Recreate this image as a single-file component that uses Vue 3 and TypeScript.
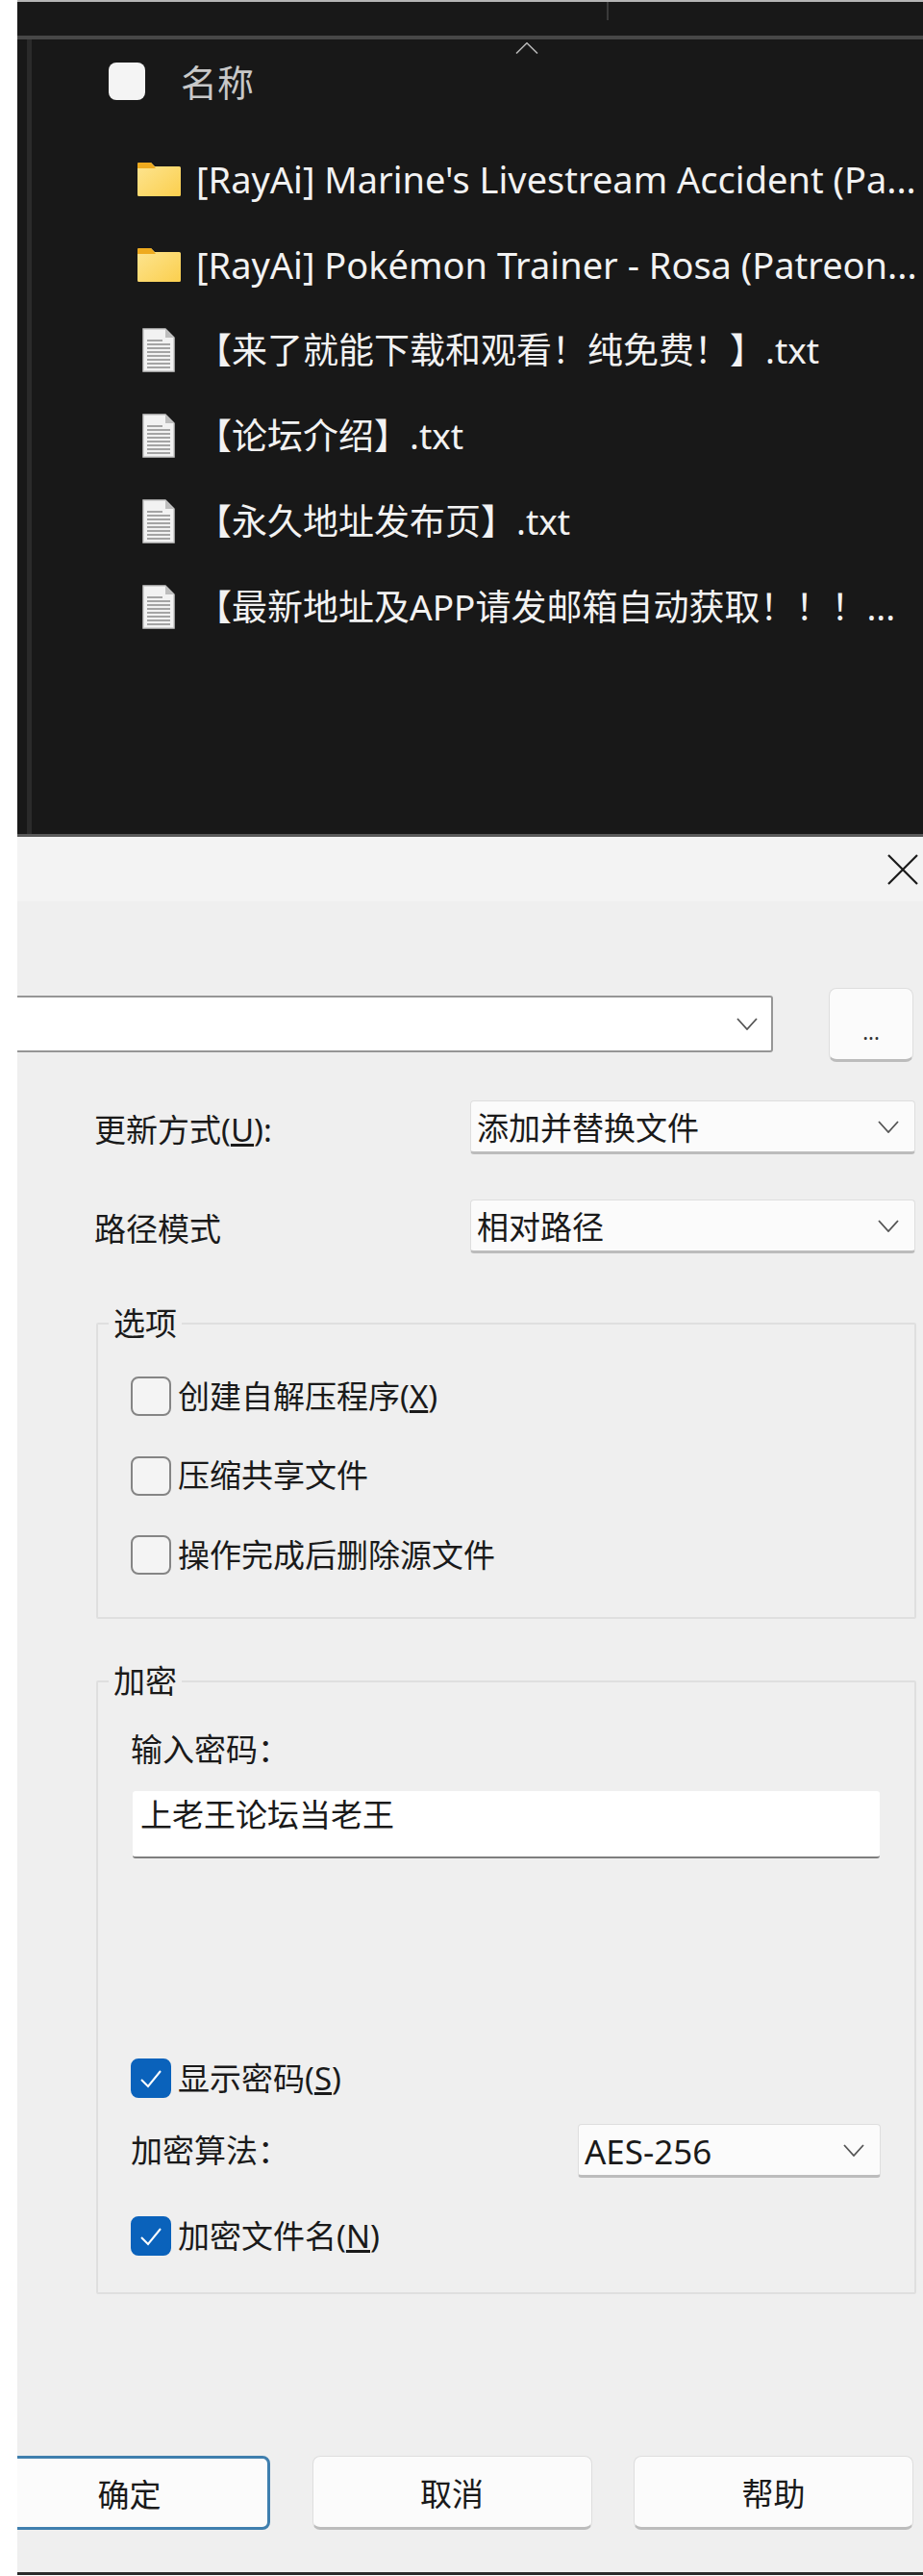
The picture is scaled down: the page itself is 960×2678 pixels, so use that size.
<script setup lang="ts">
interface Row { kind: 'folder' | 'file'; name: string }
const rows: Row[] = [
  { kind: 'folder', name: "[RayAi] Marine's Livestream Accident (Pa..." },
  { kind: 'folder', name: '[RayAi] Pokémon Trainer - Rosa (Patreon...' },
  { kind: 'file', name: '【来了就能下载和观看！纯免费！】.txt' },
  { kind: 'file', name: '【论坛介绍】.txt' },
  { kind: 'file', name: '【永久地址发布页】.txt' },
  { kind: 'file', name: '【最新地址及APP请发邮箱自动获取！！！...' },
]
const lines = [17, 21, 25, 29, 33, 37, 41]
</script>

<template>
  <div class="page">
    <section class="explorer">
      <div class="toolbar"><span class="divider"></span></div>
      <div class="list">
        <svg class="sort" viewBox="0 0 24 12" width="24" height="12"><path d="M1 11.5 12 .8 23 11.5" fill="none" stroke="#b5b5b5" stroke-width="1.6" /></svg>
        <div class="head">
          <span class="head-check"></span>
          <span class="head-name">名称</span>
        </div>
        <div v-for="r in rows" :key="r.name" class="row">
          <span class="icon">
            <svg v-if="r.kind === 'folder'" viewBox="0 0 46 36" width="46" height="36">
              <defs>
                <linearGradient id="fg" x1="0" y1="0" x2="1" y2="1">
                  <stop offset="0" stop-color="#fde592" />
                  <stop offset="1" stop-color="#fbcf4e" />
                </linearGradient>
              </defs>
              <path d="M1 2.5A1.5 1.5 0 0 1 2.500 1H15l4 4h25.500A1.500 1.500 0 0 1 46 6.500V34.500A1.500 1.500 0 0 1 44.500 36H2.500A1.500 1.500 0 0 1 1 34.500Z" fill="url(#fg)" />
              <path d="M1 2.500A1.500 1.500 0 0 1 2.500 1H15l5 6H1Z" fill="#eeaa1e" />
            </svg>
            <svg v-else viewBox="0 0 34 46" width="34" height="46">
              <path d="M1 1H24L33 10V45H1Z" fill="#f2f2f2" stroke="#c8c8c8" stroke-width="1.500" />
              <path d="M24 1V10H33Z" fill="#bdbdbd" />
              <path v-for="y in lines" :key="y" :d="`M5 ${y}H29`" stroke="#a4a4a4" stroke-width="2" />
              <path d="M5 13H21" stroke="#a4a4a4" stroke-width="2" />
            </svg>
          </span>
          <span class="row-name" :class="r.kind">{{ r.name }}</span>
        </div>
      </div>
    </section>

    <section class="dialog">
      <div class="titlebar">
        <svg viewBox="0 0 32 32" width="32" height="32"><path d="M1 1 31 31M31 1 1 31" stroke="#1a1a1a" stroke-width="2.200" fill="none" /></svg>
      </div>
      <div class="body">
        <div class="path-row">
          <div class="combo">
            <svg class="chev" viewBox="0 0 22 13" width="22" height="13"><path d="M1 1 11 12 21 1" fill="none" stroke="#555" stroke-width="1.800" /></svg>
          </div>
          <button class="browse"><span>...</span></button>
        </div>

        <div class="field first">
          <span class="label">更新方式(<u>U</u>):</span>
          <div class="select wide"><span>添加并替换文件</span><svg class="chev" viewBox="0 0 22 13" width="22" height="13"><path d="M1 1 11 12 21 1" fill="none" stroke="#555" stroke-width="1.800" /></svg></div>
        </div>
        <div class="field second">
          <span class="label">路径模式</span>
          <div class="select wide"><span>相对路径</span><svg class="chev" viewBox="0 0 22 13" width="22" height="13"><path d="M1 1 11 12 21 1" fill="none" stroke="#555" stroke-width="1.800" /></svg></div>
        </div>

        <fieldset class="group options">
          <legend>选项</legend>
          <label class="check"><span class="box"></span><span>创建自解压程序(<u>X</u>)</span></label>
          <label class="check"><span class="box"></span><span>压缩共享文件</span></label>
          <label class="check"><span class="box"></span><span>操作完成后删除源文件</span></label>
        </fieldset>

        <fieldset class="group secure">
          <legend>加密</legend>
          <div class="pw-label">输入密码：</div>
          <div class="pw-input">上老王论坛当老王</div>
          <label class="check show"><span class="box on"><svg viewBox="0 0 24 20" width="24" height="20"><path d="M2 11 9 18 22 2" fill="none" stroke="#fff" stroke-width="2" /></svg></span><span>显示密码(<u>S</u>)</span></label>
          <div class="algo">
            <span class="algo-label">加密算法：</span>
            <div class="select narrow"><span>AES-256</span><svg class="chev" viewBox="0 0 22 13" width="22" height="13"><path d="M1 1 11 12 21 1" fill="none" stroke="#555" stroke-width="1.800" /></svg></div>
          </div>
          <label class="check names"><span class="box on"><svg viewBox="0 0 24 20" width="24" height="20"><path d="M2 11 9 18 22 2" fill="none" stroke="#fff" stroke-width="2" /></svg></span><span>加密文件名(<u>N</u>)</span></label>
        </fieldset>

        <div class="actions">
          <button class="btn primary">确定</button>
          <button class="btn">取消</button>
          <button class="btn">帮助</button>
        </div>
      </div>
    </section>
    <div class="edge"></div>
  </div>
</template>

<style>
html, body { margin: 0; background: #fff; }
</style>

<style scoped>
.page {
  width: 960px;
  height: 2678px;
  box-sizing: border-box;
  padding-left: 18px;
  overflow: hidden;
  background: #fff;
  font-family: "Noto Sans", "Noto Sans CJK SC", sans-serif;
  color: #1a1a1a;
  font-size: 33px;
}
.explorer {
  height: 870px;
  box-sizing: border-box;
  background: #181818;
  border-top: 2px solid #b5b5b5;
  border-bottom: 3px solid #5a5a5a;
  display: flex;
  flex-direction: column;
}
.toolbar {
  height: 35px;
  flex: none;
  border-bottom: 4px solid #474747;
  box-sizing: content-box;
}
.divider {
  display: block;
  width: 2px;
  height: 19px;
  margin-left: 613px;
  background: #3a3a3a;
}
.list {
  position: relative;
  flex: 1;
  margin-left: 10px;
  border-left: 5px solid #2a2a2a;
  padding: 24px 0 0 80px;
}
.sort {
  position: absolute;
  left: 503px;
  top: 3px;
}
.head {
  display: flex;
  align-items: center;
  height: 39px;
  margin-bottom: 37px;
}
.head-check {
  width: 38px;
  height: 39px;
  border-radius: 8px;
  background: #f4f4f4;
}
.head-name {
  margin-left: 37px;
  font-size: 38px;
  line-height: 44px;
  color: #c8c8c8;
}
.row {
  display: flex;
  align-items: center;
  height: 89px;
  padding-left: 29px;
}
.icon {
  width: 46px;
  flex: none;
  display: flex;
  justify-content: center;
}
.row-name {
  margin-left: 16px;
  line-height: 46px;
  white-space: nowrap;
  color: #f2f2f2;
}
.row-name.folder { font-size: 38px; }
.row-name.file { font-size: 37px; }
.dialog {
  background: #efefef;
  overflow: hidden;
}
.titlebar {
  height: 67px;
  box-sizing: border-box;
  background: #f3f3f3;
  padding: 18px 5px 0 0;
  display: flex;
  justify-content: flex-end;
  align-items: flex-start;
}
.body {
  padding: 90px 0 44px;
  background: #efefef;
}
.path-row {
  display: flex;
  align-items: flex-start;
}
.combo {
  width: 796px;
  height: 59px;
  margin: 8px 0 0 -10px;
  box-sizing: border-box;
  background: #fff;
  border: 2px solid #969696;
  border-radius: 3px;
  display: flex;
  align-items: center;
  justify-content: flex-end;
  padding-right: 14px;
}
.browse {
  width: 88px;
  height: 77px;
  margin-left: 58px;
  box-sizing: border-box;
  padding: 14px 0 0;
  background: #fbfbfb;
  border: 1px solid #dedede;
  border-bottom: 3px solid #bcbcbc;
  border-radius: 8px;
  font: inherit;
  font-size: 22px;
  color: #333;
}
.field {
  display: flex;
  align-items: center;
  padding-left: 80px;
}
.field.first { margin-top: 40px; }
.field.second { margin-top: 47px; }
.label {
  width: 392px;
  flex: none;
  padding-top: 6px;
  line-height: 40px;
}
.select {
  box-sizing: border-box;
  height: 56px;
  display: flex;
  align-items: center;
  justify-content: space-between;
  background: #fbfbfb;
  border: 1px solid #dedede;
  border-bottom: 3px solid #bcbcbc;
  border-radius: 4px;
  padding: 0 16px 0 6px;
  line-height: 40px;
}
.select > span { padding-top: 4px; }
.select.wide { width: 463px; margin-left: -1px; }
.select.narrow { width: 315px; font-size: 35px; }
.group {
  margin: 0 0 0 82px;
  width: 853px;
  min-width: 0;
  box-sizing: border-box;
  border: 2px solid #dfdfdf;
  border-radius: 2px;
  padding: 0 0 0 34px;
}
.group legend {
  margin-left: -23px;
  padding: 0 5px;
  line-height: 40px;
}
.options {
  margin-top: 53px;
  padding-top: 35px;
  padding-bottom: 44px;
}
.secure {
  margin-top: 45px;
  padding-top: 31px;
  padding-bottom: 38px;
}
.check {
  display: flex;
  align-items: center;
  height: 41px;
  line-height: 40px;
}
.options .check + .check { margin-top: 41.500px; }
.box {
  width: 42px;
  height: 41px;
  flex: none;
  box-sizing: border-box;
  margin-right: 7px;
  border: 2px solid #858585;
  border-radius: 8px;
  background: #f4f4f4;
  display: flex;
  align-items: center;
  justify-content: center;
}
.box.on {
  border-color: #0a62bb;
  background: #0a62bb;
}
.pw-label { line-height: 40px; }
.pw-input {
  width: 777px;
  height: 70px;
  margin: 23px 0 0 2px;
  box-sizing: border-box;
  background: #fff;
  border-bottom: 2px solid #7f7f7f;
  border-radius: 3px;
  padding: 5px 0 0 8px;
  line-height: 40px;
}
.check.show { margin-top: 208px; }
.algo {
  display: flex;
  align-items: center;
  margin-top: 27px;
}
.algo-label {
  width: 465px;
  flex: none;
  line-height: 40px;
}
.check.names { margin-top: 40px; }
.actions {
  display: flex;
  gap: 43.500px;
  margin: 168px 0 0 -30px;
}
.btn {
  width: 291px;
  height: 77px;
  box-sizing: border-box;
  background: #fbfbfb;
  border: 1px solid #dedede;
  border-bottom: 3px solid #bcbcbc;
  border-radius: 8px;
  padding: 0;
  font: inherit;
  color: #1a1a1a;
}
.btn.primary {
  width: 293px;
  border: 3px solid #3f7fae;
}
.edge {
  height: 3px;
  background: #2a2a2a;
}
</style>
